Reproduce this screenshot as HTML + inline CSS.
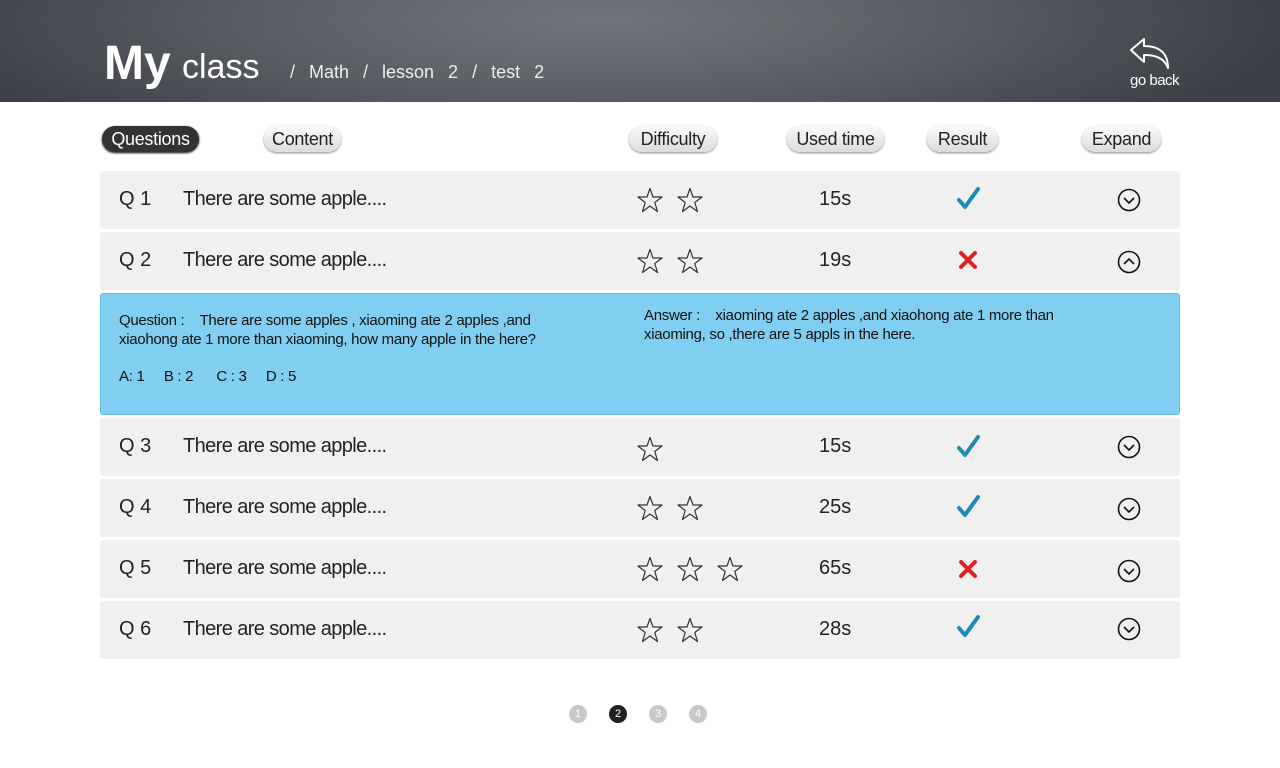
<!DOCTYPE html><html><head><style>
body{margin:0;width:1280px;height:768px;background:#fff;font-family:"Liberation Sans",sans-serif;position:relative;overflow:hidden}
.hd{position:absolute;left:0;top:0;width:1280px;height:102px;background:radial-gradient(ellipse 700px 160px at 600px 20px,#72757b,#5a5d63 50%,#3b3e45 100%)}
.a{position:absolute;white-space:nowrap}
.pill{position:absolute;top:126px;height:26px;border-radius:13px;background:linear-gradient(#fafafa,#dcdcdc);box-shadow:0 1px 2px #888;font-size:18px;line-height:26px;text-align:center;color:#222;letter-spacing:-0.3px}
.row{position:absolute;left:100px;width:1080px;height:58px;background:#f0f0f0;border-radius:3px;font-size:20px;color:#222}
.row span{position:absolute;top:17px}
.t{letter-spacing:-0.6px}
.st{position:absolute;top:14px;font-size:28px;color:#333;line-height:30px}
.ex{position:absolute;left:1017px;top:17px}
.dot{position:absolute;top:705px;width:18px;height:18px;border-radius:50%;background:#c8c8c8;color:#fff;font-size:11px;line-height:18px;text-align:center}
</style></head><body>
<div class="hd"></div>
<div class="a" style="left:104px;top:36px;font-size:48px;font-weight:bold;color:#fff">My</div>
<div class="a" style="left:182px;top:48px;font-size:34px;color:#fff">class</div>
<div class="a" style="left:290px;top:62px;font-size:18px;color:#eee;word-spacing:9px">/ Math / lesson 2 / test 2</div>
<svg class="a" style="left:1128px;top:36px" width="44" height="34" viewBox="0 0 44 34"><path d="M3 14 L16 3 L16 10 C30 10 40 16 40 32 C36 22 28 19 16 19 L16 26 Z" fill="none" stroke="#fff" stroke-width="2" stroke-linejoin="round"/></svg>
<div class="a" style="left:1130px;top:72px;font-size:15px;color:#fff;letter-spacing:-0.5px">go back</div>
<div class="pill" style="left:102px;width:97px;background:#333;color:#fff;box-shadow:0 1px 2px #000">Questions</div>
<div class="pill" style="left:264px;width:77px">Content</div>
<div class="pill" style="left:629px;width:88px">Difficulty</div>
<div class="pill" style="left:787px;width:97px">Used time</div>
<div class="pill" style="left:927px;width:71px">Result</div>
<div class="pill" style="left:1082px;width:79px">Expand</div>

<svg width="0" height="0" style="position:absolute"><defs>
<symbol id="ck" viewBox="0 0 24 24"><path d="M2 13 L8 20 L21 2" fill="none" stroke="#1e8ab8" stroke-width="4" stroke-linecap="round" stroke-linejoin="round"/></symbol>
<symbol id="x" viewBox="0 0 20 20"><path d="M3 3 L17 17 M17 3 L3 17" stroke="#e02020" stroke-width="4" stroke-linecap="round"/></symbol>
<symbol id="dn" viewBox="0 0 24 24"><circle cx="12" cy="12" r="10.5" fill="none" stroke="#111" stroke-width="1.6"/><path d="M7 10 L12 15 L17 10" fill="none" stroke="#111" stroke-width="1.6"/></symbol>
<symbol id="up" viewBox="0 0 24 24"><circle cx="12" cy="12" r="10.5" fill="none" stroke="#111" stroke-width="1.6"/><path d="M7 14 L12 9 L17 14" fill="none" stroke="#111" stroke-width="1.6"/></symbol>
<symbol id="s" viewBox="0 0 26 26"><path d="M13 1.5 L16 10 L25 10 L17.8 15.5 L20.5 24.5 L13 19 L5.5 24.5 L8.2 15.5 L1 10 L10 10 Z" fill="none" stroke="#333" stroke-width="1.2" stroke-linejoin="round"/></symbol>
</defs></svg>

<div class="row" style="top:171px"><span style="left:19px">Q 1</span><span class="t" style="left:83px">There are some apple....</span><svg style="position:absolute;left:537px;top:16px" width="26" height="26"><use href="#s"/></svg><svg style="position:absolute;left:577px;top:16px" width="26" height="26"><use href="#s"/></svg><span style="left:719px">15s</span><svg style="position:absolute;left:857px;top:16px" width="24" height="24"><use href="#ck"/></svg><svg class="ex" width="24" height="24"><use href="#dn"/></svg></div>
<div class="row" style="top:232px"><span style="left:19px">Q 2</span><span class="t" style="left:83px">There are some apple....</span><svg style="position:absolute;left:537px;top:16px" width="26" height="26"><use href="#s"/></svg><svg style="position:absolute;left:577px;top:16px" width="26" height="26"><use href="#s"/></svg><span style="left:719px">19s</span><svg style="position:absolute;left:858px;top:18px" width="20" height="20"><use href="#x"/></svg><svg class="ex" width="24" height="24" style="top:18px"><use href="#up"/></svg></div>
<div class="row" style="top:293px;height:122px;background:#80cef2;border:1px solid #6bb8e0;box-sizing:border-box;font-size:15px;color:#111">
<span style="left:18px;top:17px;line-height:19px;width:470px;white-space:normal;letter-spacing:-0.3px">Question :&nbsp;&nbsp;&nbsp; There are some apples , xiaoming ate 2 apples ,and xiaohong ate 1 more than xiaoming, how many apple in the here?</span>
<span style="left:18px;top:74px;letter-spacing:-0.3px">A: 1 &nbsp;&nbsp;&nbsp; B : 2 &nbsp;&nbsp;&nbsp;&nbsp; C : 3 &nbsp;&nbsp;&nbsp; D : 5</span>
<span style="left:543px;top:12px;line-height:19px;width:470px;white-space:normal;letter-spacing:-0.3px">Answer :&nbsp;&nbsp;&nbsp; xiaoming ate 2 apples ,and xiaohong ate 1 more than xiaoming, so ,there are 5 appls in the here.</span></div>
<div class="row" style="top:418px"><span style="left:19px">Q 3</span><span class="t" style="left:83px">There are some apple....</span><svg style="position:absolute;left:537px;top:18px" width="26" height="26"><use href="#s"/></svg><span style="left:719px">15s</span><svg style="position:absolute;left:857px;top:17px" width="24" height="24"><use href="#ck"/></svg><svg class="ex" width="24" height="24"><use href="#dn"/></svg></div>
<div class="row" style="top:479px"><span style="left:19px">Q 4</span><span class="t" style="left:83px">There are some apple....</span><svg style="position:absolute;left:537px;top:16px" width="26" height="26"><use href="#s"/></svg><svg style="position:absolute;left:577px;top:16px" width="26" height="26"><use href="#s"/></svg><span style="left:719px">25s</span><svg style="position:absolute;left:857px;top:16px" width="24" height="24"><use href="#ck"/></svg><svg class="ex" width="24" height="24" style="top:18px"><use href="#dn"/></svg></div>
<div class="row" style="top:540px"><span style="left:19px">Q 5</span><span class="t" style="left:83px">There are some apple....</span><svg style="position:absolute;left:537px;top:16px" width="26" height="26"><use href="#s"/></svg><svg style="position:absolute;left:577px;top:16px" width="26" height="26"><use href="#s"/></svg><svg style="position:absolute;left:617px;top:16px" width="26" height="26"><use href="#s"/></svg><span style="left:719px">65s</span><svg style="position:absolute;left:858px;top:19px" width="20" height="20"><use href="#x"/></svg><svg class="ex" width="24" height="24" style="top:19px"><use href="#dn"/></svg></div>
<div class="row" style="top:601px"><span style="left:19px">Q 6</span><span class="t" style="left:83px">There are some apple....</span><svg style="position:absolute;left:537px;top:16px" width="26" height="26"><use href="#s"/></svg><svg style="position:absolute;left:577px;top:16px" width="26" height="26"><use href="#s"/></svg><span style="left:719px">28s</span><svg style="position:absolute;left:857px;top:14px" width="24" height="24"><use href="#ck"/></svg><svg class="ex" width="24" height="24" style="top:16px"><use href="#dn"/></svg></div>

<div class="dot" style="left:569px">1</div>
<div class="dot" style="left:609px;background:#222">2</div>
<div class="dot" style="left:649px">3</div>
<div class="dot" style="left:689px">4</div>
</body></html>
